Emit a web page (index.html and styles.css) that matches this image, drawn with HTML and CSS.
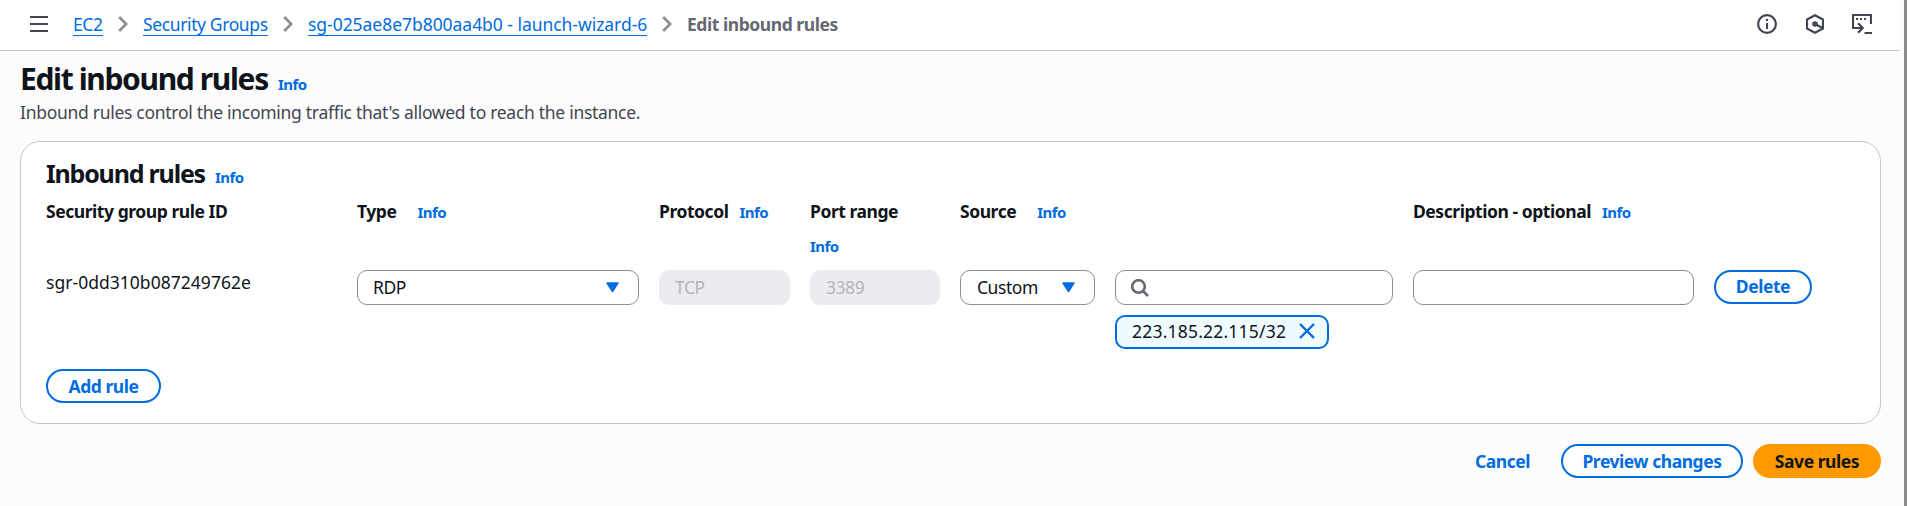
FILE: index.html
```html
<!DOCTYPE html>
<html lang="en">
<head>
<meta charset="utf-8">
<title>Edit inbound rules</title>
<link rel="stylesheet" href="styles.css">
</head>
<body>
<div class="app">
  <header class="topbar">
    <svg class="menu" width="18" height="16" viewBox="0 0 18 16"><path d="M0 1h18M0 8h18M0 15h18" stroke="#424650" stroke-width="2"/></svg>
    <nav class="crumbs">
      <a class="crumb crumb-ec2" href="#">EC2</a>
      <svg class="chev" width="10" height="16" viewBox="0 0 10 16"><path d="M1.2 1l7 7-7 7"/></svg>
      <a class="crumb crumb-groups" href="#">Security Groups</a>
      <svg class="chev" width="10" height="16" viewBox="0 0 10 16"><path d="M1.2 1l7 7-7 7"/></svg>
      <a class="crumb crumb-sg" href="#">sg-025ae8e7b800aa4b0 - launch-wizard-6</a>
      <svg class="chev" width="10" height="16" viewBox="0 0 10 16"><path d="M1.2 1l7 7-7 7"/></svg>
      <span class="crumb-current">Edit inbound rules</span>
    </nav>
    <div class="tools">
      <svg width="20" height="20" viewBox="0 0 20 20"><circle cx="10" cy="10" r="8.900" fill="none" stroke="#424650" stroke-width="2.200"/><path d="M9 5h2v2H9zM9 9h2v6H9z" fill="#424650"/></svg>
      <svg class="hex" width="18" height="20" viewBox="0 0 18 20"><path d="M9 1.2l8 4.3v9L9 18.8l-8-4.3v-9z" fill="none" stroke="#424650" stroke-width="2.200" stroke-linejoin="round"/><circle cx="9" cy="10" r="2.800" fill="#424650"/><path d="M9 10l7.500 4" stroke="#424650" stroke-width="2.200"/></svg>
      <svg width="20" height="20" viewBox="0 0 20 20"><path d="M19 10V1H1v13h9M6 9.200l4.800 4.800L6 18.600" fill="none" stroke="#424650" stroke-width="2.200" stroke-linejoin="round"/><path d="M4 4h2v2H4zM8 4h2v2H8zM12 4h2v2h-2zM12.500 18H20v2h-7.500z" fill="#424650"/></svg>
    </div>
  </header>
  <main class="content">
    <div class="title-row"><h1>Edit inbound rules</h1><a class="info" href="#">Info</a></div>
    <p class="lead">Inbound rules control the incoming traffic that's allowed to reach the instance.</p>
    <section class="card">
      <div class="title-row card-title"><h2>Inbound rules</h2><a class="info" href="#">Info</a></div>
      <div class="grid labels">
        <div class="label"><b>Security group rule ID</b></div>
        <div class="label wide"><b>Type</b><a class="info" href="#">Info</a></div>
        <div class="label"><b>Protocol</b><a class="info" href="#">Info</a></div>
        <div class="label stacked"><b>Port range</b><a class="info" href="#">Info</a></div>
        <div class="label wide"><b>Source</b><a class="info" href="#">Info</a></div>
        <div></div>
        <div class="label"><b>Description - optional</b><a class="info" href="#">Info</a></div>
        <div></div>
      </div>
      <div class="grid values">
        <div class="rule-id">sgr-0dd310b087249762e</div>
        <div class="field select"><span>RDP</span><svg width="13" height="11" viewBox="0 0 13 11"><path d="M1 1h11L6.500 9.500z"/></svg></div>
        <div class="field disabled"><span>TCP</span></div>
        <div class="field disabled"><span>3389</span></div>
        <div class="field select source-kind"><span>Custom</span><svg width="13" height="11" viewBox="0 0 13 11"><path d="M1 1h11L6.500 9.500z"/></svg></div>
        <div class="source">
          <div class="field"><svg width="18" height="18" viewBox="0 0 18 18"><path d="M12 12l5 5" class="lens"/><circle cx="7.500" cy="7.500" r="6.300" class="lens"/></svg></div>
          <div class="chip"><span>223.185.22.115/32</span><svg width="16" height="16" viewBox="0 0 16 16"><path d="M1 1l14 14M15 1L1 15"/></svg></div>
        </div>
        <div class="field"></div>
        <div class="btn delete"><span>Delete</span></div>
      </div>
      <div class="btn add"><span>Add rule</span></div>
    </section>
    <footer class="actions">
      <div class="cancel">Cancel</div>
      <div class="btn preview"><span>Preview changes</span></div>
      <div class="btn save"><span>Save rules</span></div>
    </footer>
  </main>
</div>
</body>
</html>
```
FILE: styles.css
```css
* { box-sizing: border-box; }
html { height: 506px; overflow: hidden; }
body { margin: 0; height: 506px; overflow: hidden; background: #fcfcfd; color: #0f141a; font: 17.5px/25px "Noto Sans", sans-serif; letter-spacing: -0.45px; }
a { color: #006ce0; text-decoration: none; }
h1, h2, p { margin: 0; }
svg { display: block; flex: none; }
div, span, a, b, h1, h2, p { white-space: nowrap; }
.app { height: 506px; border-right: 3px solid #8c8c8c; }
.topbar { width: 1900px; height: 51px; display: flex; align-items: center; background: #fff; border-bottom: 1px solid #c6c6cd; padding: 0 28px 2px 30px; }
.menu { margin-right: 25px; }
.crumbs { display: flex; align-items: center; flex: 1; }
.crumb { border-bottom: 1px solid #006ce0; height: 22px; line-height: 20px; margin-top: 2px; }
.crumb-ec2 { width: 30px; }
.crumb-groups { width: 125px; letter-spacing: -0.38px; }
.crumb-sg { width: 339px; letter-spacing: -0.04px; }
.crumb-current { font-weight: 700; color: #656871; }
.chev { margin: 0 15px; fill: none; stroke: #8c8c94; stroke-width: 2.6; }
.tools { display: flex; align-items: center; gap: 29px; }
.hex { margin-right: -1px; }
.content { padding: 13px 23px 0 20px; }
.title-row { display: flex; align-items: baseline; height: 30px; }
h1 { font-size: 30px; line-height: 30px; width: 258px; letter-spacing: -1.36px; }
h2 { font-size: 25px; line-height: 30px; width: 169px; letter-spacing: -1.2px; }
.info { font-size: 15px; font-weight: 700; letter-spacing: -0.55px; }
.title-row .info { line-height: 15px; }
.lead { color: #424650; margin-top: 6px; letter-spacing: -0.29px; }
.card { margin-top: 16px; height: 283px; background: #fff; border: 1px solid #c6c6cd; border-radius: 20px; padding: 16px 25px 0; }
.grid { display: grid; grid-template-columns: 291px 282px 131px 130px 135px 278px 281px 98px; column-gap: 20px; }
.labels { margin-top: 11px; height: 71px; }
.label { display: flex; flex-wrap: wrap; column-gap: 11px; row-gap: 10px; align-content: flex-start; align-items: baseline; letter-spacing: -0.45px; }
.label.wide { column-gap: 21px; }
.label.stacked b { width: 100%; }
.values { height: 99px; align-items: start; }
.rule-id { line-height: 24px; letter-spacing: 0.03px; }
.field { height: 35px; border: 1px solid #8c8c94; border-radius: 10px; background: #fff; display: flex; align-items: center; justify-content: space-between; padding: 0 19px 0 15px; }
.source-kind { padding-left: 16px; }
.disabled { background: #ebebf0; border-color: #ebebf0; color: #b4b4bb; }
.select svg path { fill: #006ce0; stroke: #006ce0; stroke-width: 1.4; stroke-linejoin: round; }
.lens { fill: none; stroke: #656871; stroke-width: 2.6; }
.chip { margin-top: 10px; width: 214px; height: 34px; border: 2px solid #006ce0; border-radius: 10px; background: #f0fbff; display: flex; align-items: center; justify-content: space-between; padding: 0 12px 2px 15px; letter-spacing: 0.2px; }
.chip path { stroke: #006ce0; stroke-width: 2.4; }
.btn { height: 34px; border: 2px solid #006ce0; border-radius: 17px; color: #006ce0; background: #fff; font-weight: 700; display: flex; align-items: center; justify-content: center; }
.delete { width: 98px; padding-bottom: 2px; }
.add { width: 115px; }
.actions { display: flex; justify-content: flex-end; align-items: center; margin-top: 20px; }
.cancel { color: #006ce0; font-weight: 700; width: 86px; }
.preview { width: 182px; margin-right: 10px; }
.save { width: 128px; background: #f90; border-color: #f90; color: #0f141a; }
```
